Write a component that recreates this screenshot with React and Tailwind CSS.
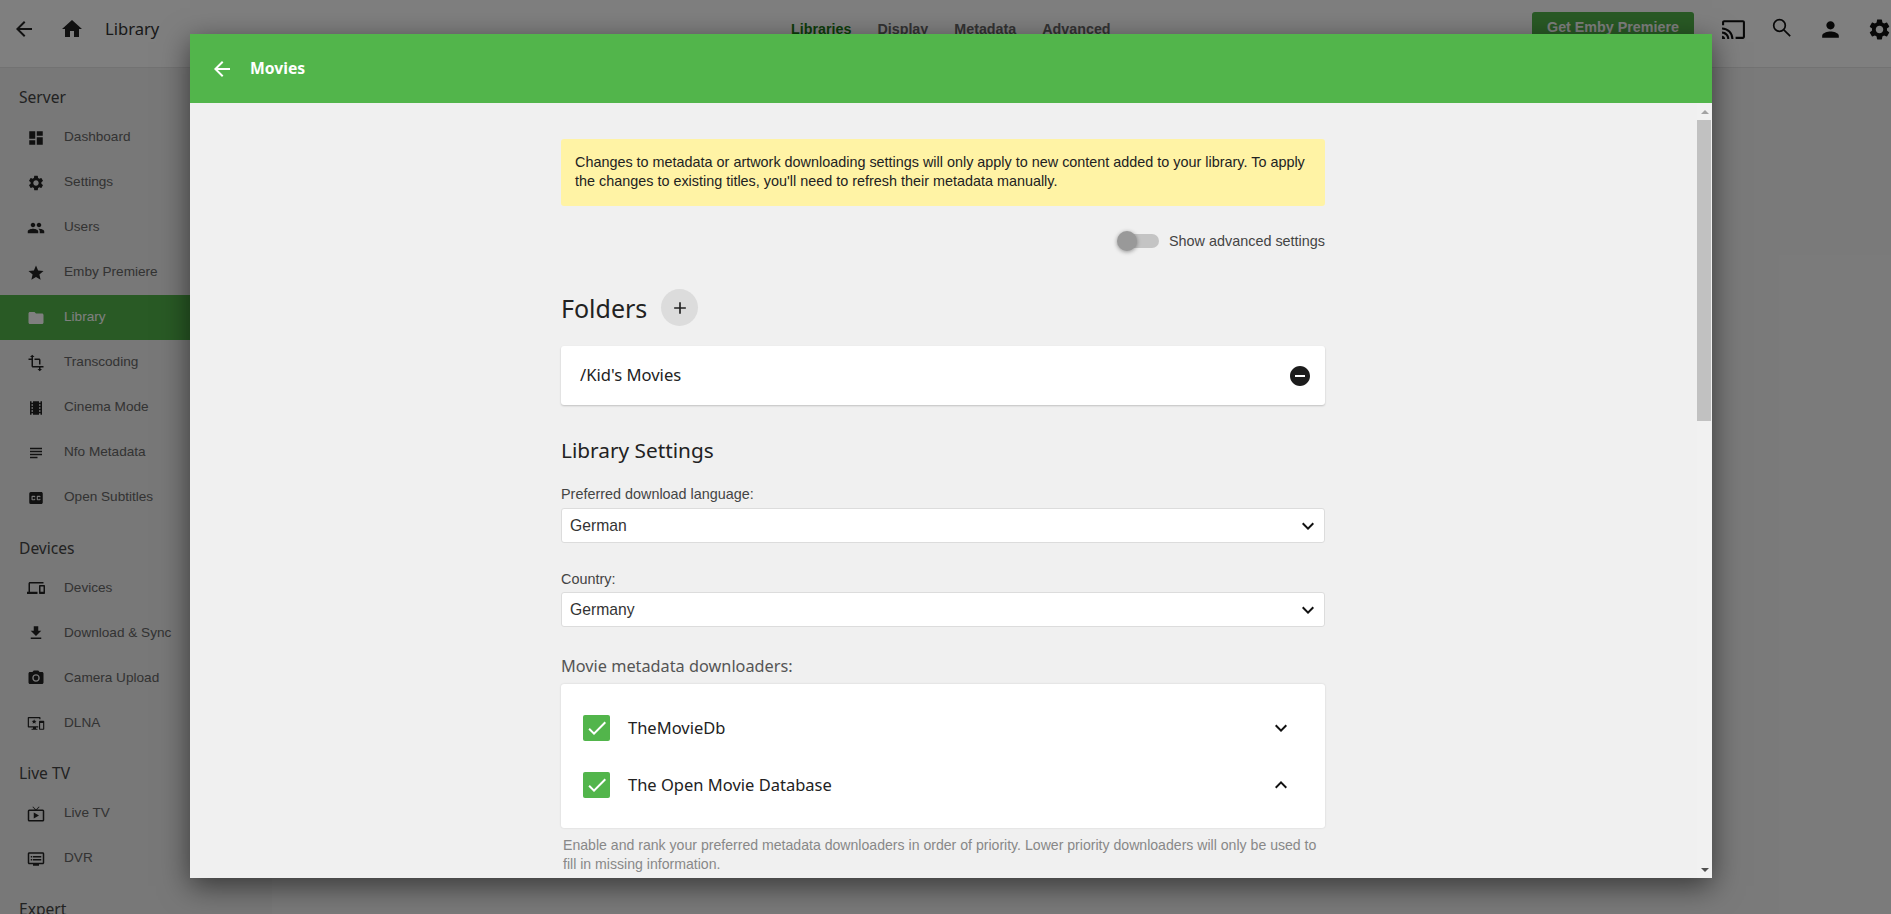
import {
  MdArrowBack, MdHome, MdCast, MdPerson, MdSettings, MdDashboard, MdPeople, MdStar, MdFolder,
  MdTransform, MdLocalMovies, MdSubject, MdClosedCaption, MdDevices, MdFileDownload, MdPhotoCamera,
  MdLiveTv, MdDvr, MdAdd, MdRemoveCircle, MdKeyboardArrowDown, MdKeyboardArrowUp, MdCheck,
} from 'react-icons/md'

const DlnaIcon = ({ size = 20 }) => (
  <svg width={size} height={size} viewBox="0 0 24 24" fill="currentColor">
    <path d="M2 4h15a1 1 0 0 1 1 1v2h-1.600V5.600H2.600v10.800H15V18h-3v1.500h2V21H6v-1.500h2V18H2a1 1 0 0 1-1-1V5a1 1 0 0 1 1-1z" />
    <path d="M9.500 7l.9 2.100 2.300.2-1.700 1.500.5 2.200-2-1.200-2 1.200.5-2.200-1.700-1.500 2.300-.2z" />
    <path fillRule="evenodd" d="M17 9h5a1 1 0 0 1 1 1v10a1 1 0 0 1-1 1h-5a1 1 0 0 1-1-1V10a1 1 0 0 1 1-1zm.5 3v7.500h4V12z" />
  </svg>
)

const SearchIcon = () => (
  <svg width="24" height="24" viewBox="0 0 24 24" fill="none" stroke="currentColor" strokeWidth="1.700">
    <circle cx="9.500" cy="8.500" r="5.800" />
    <path d="M13.800 12.800l6.400 6.400" />
  </svg>
)

const sections = [
  { title: 'Server', items: [
    ['Dashboard', MdDashboard], ['Settings', MdSettings], ['Users', MdPeople], ['Emby Premiere', MdStar],
    ['Library', MdFolder, true], ['Transcoding', MdTransform], ['Cinema Mode', MdLocalMovies],
    ['Nfo Metadata', MdSubject], ['Open Subtitles', MdClosedCaption],
  ] },
  { title: 'Devices', items: [
    ['Devices', MdDevices], ['Download & Sync', MdFileDownload], ['Camera Upload', MdPhotoCamera], ['DLNA', DlnaIcon],
  ] },
  { title: 'Live TV', items: [['Live TV', MdLiveTv], ['DVR', MdDvr]] },
  { title: 'Expert', items: [] },
]

const heading = { fontFamily: '"Noto Sans", sans-serif' }

function Select({ value }) {
  return (
    <div className="flex h-[35px] items-center justify-between rounded-[3px] border border-[#dcdcdc] bg-white pl-[8px] pr-[4px] text-[15.7px] text-[#333]">
      <span>{value}</span>
      <MdKeyboardArrowDown size={24} className="text-[#111]" />
    </div>
  )
}

function Downloader({ name, open }) {
  const Chevron = open ? MdKeyboardArrowUp : MdKeyboardArrowDown
  return (
    <div className="flex h-[57px] items-center pl-[22px] pr-[32px]">
      <span className="flex h-[26px] w-[27px] items-center justify-center rounded-[2px] bg-[#52b54b] text-white">
        <MdCheck size={24} />
      </span>
      <span className="ml-[18px] flex-1 pt-[2px] text-[16.5px] text-[#222]" style={heading}>{name}</span>
      <Chevron size={24} className="text-[#111]" />
    </div>
  )
}

export default function App() {
  return (
    <div className="relative h-[914px] w-[1891px] overflow-hidden bg-[#f5f5f5] font-['Liberation_Sans',sans-serif]">
      {/* Top bar */}
      <div className="flex h-[68px] items-start border-b border-[#e4e4e4] bg-white">
        <div className="flex h-[58px] w-[272px] items-center pl-[12px] text-[#222]">
          <MdArrowBack size={24} />
          <MdHome size={24} className="ml-[24px]" />
          <span className="ml-[21px] text-[16.6px] text-[#333]" style={heading}>Library</span>
        </div>
        <div className="ml-[519px] flex h-[58px] items-center gap-[26px] pt-[1px] text-[14.3px] font-bold text-[#666]">
          <span className="text-[#1a7a14]">Libraries</span>
          <span>Display</span>
          <span>Metadata</span>
          <span>Advanced</span>
        </div>
        <div className="ml-auto flex h-[58px] items-start text-[#111]">
          <div className="mt-[12px] flex h-[34px] w-[162px] items-center justify-center rounded-[3px] bg-[#52b54b] pb-[2px] text-[14.3px] font-bold text-white">
            Get Emby Premiere
          </div>
          <div className="ml-[27px] flex h-[58px] items-center gap-[24px] pr-0">
            <MdCast size={25} />
            <SearchIcon />
            <MdPerson size={25} />
            <MdSettings size={25} className="mr-[-1px]" />
          </div>
        </div>
      </div>

      {/* Sidebar and empty main area */}
      <div className="flex h-[846px]">
        <div className="w-[272px] shrink-0 bg-[#f0f0f0] pt-[13px]">
          {sections.map((s, i) => (
            <div key={s.title} className={i > 0 ? 'mt-[11.5px]' : ''}>
              <div className="flex h-[34px] items-center pl-[19px] text-[15.6px] text-[#444]" style={heading}>{s.title}</div>
              {s.items.map(([label, Icon, active]) => (
                <div
                  key={label}
                  className={`flex h-[45px] items-center pl-[27px] text-[13.6px] ${active ? 'bg-[#52b54b] text-white' : 'text-[#666]'}`}
                >
                  <span className={active ? 'text-white' : 'text-[#222]'}><Icon size={18} /></span>
                  <span className="ml-[19px]">{label}</span>
                </div>
              ))}
            </div>
          ))}
        </div>
        <div className="flex-1" />
      </div>

      {/* Overlay */}
      <div className="absolute inset-0 bg-black/50" />

      {/* Dialog */}
      <div className="absolute left-[190px] top-[34px] flex h-[844px] w-[1522px] flex-col bg-[#f0f0f0] shadow-[0_8px_28px_rgba(0,0,0,0.55)]">
        <div className="flex h-[69px] shrink-0 items-center bg-[#52b54b] pl-[20px] text-white">
          <MdArrowBack size={24} />
          <span className="ml-[16px] text-[15.7px] font-bold" style={heading}>Movies</span>
        </div>
        <div className="flex min-h-0 flex-1">
          <div className="min-w-0 flex-1 overflow-hidden">
            <div className="ml-[371px] w-[764px] pt-[36px]">
              <div className="rounded-[3px] bg-[#fff3a5] pb-[15px] pl-[14px] pr-[14px] pt-[14px] text-[14.4px] leading-[19px] text-[#222]">
                Changes to metadata or artwork downloading settings will only apply to new content added to your library. To apply the changes to existing titles, you'll need to refresh their metadata manually.
              </div>

              <div className="mt-[20px] flex h-[30px] items-center justify-end text-[14.4px] text-[#444]">
                <div className="relative h-[14px] w-[34px] rounded-full bg-[#c4c4c4]">
                  <div className="absolute left-[-8px] top-[-3px] h-[20px] w-[20px] rounded-full bg-[#999] shadow-[0_1px_4px_rgba(0,0,0,0.4)]" />
                </div>
                <span className="ml-[10px] pt-[1px]">Show advanced settings</span>
              </div>

              <div className="mt-[33px] flex h-[37px] items-center">
                <span className="pt-[2px] text-[25px] text-[#222]" style={heading}>Folders</span>
                <span className="ml-[14px] flex h-[37px] w-[37px] items-center justify-center rounded-full bg-[#dcdcdc] text-[#222]">
                  <MdAdd size={20} />
                </span>
              </div>

              <div className="mt-[20px] flex h-[59px] items-center justify-between rounded-[3px] bg-white pl-[19px] pr-[13px] shadow-[0_1px_2px_rgba(0,0,0,0.2)]">
                <span className="text-[16.6px] text-[#222]" style={heading}>/Kid's Movies</span>
                <MdRemoveCircle size={24} className="text-[#1c1c1c]" />
              </div>

              <div className="mt-[31px] flex h-[30px] items-center text-[20.8px] text-[#222]" style={heading}>Library Settings</div>

              <div className="mt-[18px] h-[20px] text-[14.4px] leading-[20px] text-[#444]">Preferred download language:</div>
              <div className="mt-[4px]"><Select value="German" /></div>

              <div className="mt-[26px] h-[20px] text-[14.4px] leading-[20px] text-[#444]">Country:</div>
              <div className="mt-[3px]"><Select value="Germany" /></div>

              <div className="mt-[29px] h-[20px] text-[16.3px] leading-[20px] text-[#555]" style={heading}>Movie metadata downloaders:</div>
              <div className="mt-[8px] h-[144px] rounded-[3px] bg-white py-[15px] shadow-[0_0_2px_rgba(0,0,0,0.15)]">
                <Downloader name="TheMovieDb" />
                <Downloader name="The Open Movie Database" open />
              </div>
              <div className="mt-[8px] pl-[2px] text-[14.1px] leading-[19px] text-[#888]">
                Enable and rank your preferred metadata downloaders in order of priority. Lower priority downloaders will only be used to fill in missing information.
              </div>
            </div>
          </div>

          {/* Scrollbar */}
          <div className="flex w-[15px] shrink-0 flex-col bg-[#f1f1f1]">
            <div className="flex h-[17px] items-center justify-center">
              <div className="h-0 w-0 border-x-[4px] border-b-[4px] border-x-transparent border-b-[#a3a3a3]" />
            </div>
            <div className="h-[301px] w-[14px] bg-[#c1c1c1]" />
            <div className="flex-1" />
            <div className="flex h-[17px] items-center justify-center">
              <div className="h-0 w-0 border-x-[4px] border-t-[4px] border-x-transparent border-t-[#505050]" />
            </div>
          </div>
        </div>
      </div>
    </div>
  )
}
